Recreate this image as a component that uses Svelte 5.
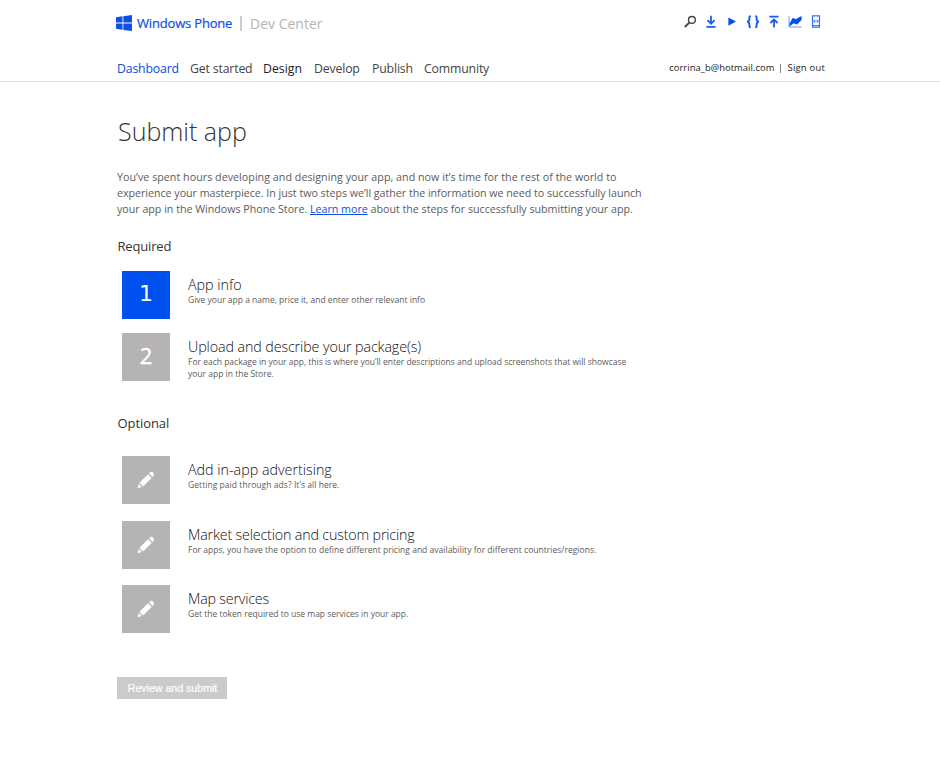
<script>
  const nav = [
    { label: 'Dashboard', state: 'active', width: 73 },
    { label: 'Get started', state: '', width: 73 },
    { label: 'Design', state: 'strong', width: 51 },
    { label: 'Develop', state: '', width: 58 },
    { label: 'Publish', state: '', width: 52 },
    { label: 'Community', state: '', width: 70 }
  ];
  const required = [
    { id: 'info', mark: '1', title: 'App info', lines: ['Give your app a name, price it, and enter other relevant info'] },
    {
      id: 'upload',
      mark: '2',
      title: 'Upload and describe your package(s)',
      lines: [
        'For each package in your app, this is where you’ll enter descriptions and upload screenshots that will showcase',
        'your app in the Store.'
      ]
    }
  ];
  const optional = [
    { id: 'ads', title: 'Add in-app advertising', lines: ['Getting paid through ads? It’s all here.'] },
    {
      id: 'market',
      title: 'Market selection and custom pricing',
      lines: ['For apps, you have the option to define different pricing and availability for different countries/regions.']
    },
    { id: 'maps', title: 'Map services', lines: ['Get the token required to use map services in your app.'] }
  ];
</script>

{#snippet step(item)}
  <li class="step {item.id}">
    <div class="tile">
      {#if item.mark}
        {item.mark}
      {:else}
        <svg width="18" height="18" viewBox="0 0 18 18" fill="#fff">
          <path d="M11 3.2 14.7 6.9 6 15.4 2.4 11.8z" />
          <path d="M12 2.3 13.1 1.2Q14.6 0 16.1 1.5T16.6 4.8L15.5 5.9z" />
          <path d="M1.7 12.9 4.8 16 .6 17.2z" />
        </svg>
      {/if}
    </div>
    <div class="copy">
      <h3>{item.title}</h3>
      {#each item.lines as line}
        <p>{line}</p>
      {/each}
    </div>
  </li>
{/snippet}

<div class="page">
  <header>
    <div class="top">
      <a class="brand" href="#home">
        <svg width="16" height="16" viewBox="0 0 16 16" fill="#0d4fe0">
          <path d="M0 2.3 6.5 1.3V7.6H0zM7.3 1.2 16 0V7.6H7.3zM0 8.4H6.5V14.8L0 13.8zM7.3 8.4H16V16L7.3 14.9z" />
        </svg>
        <span class="name">Windows Phone</span>
        <i class="bar"></i>
        <span class="center">Dev Center</span>
      </a>
      <div class="tools">
        <svg viewBox="0 0 14 14" fill="none" stroke="#444"><circle cx="8.9" cy="4.9" r="3.4" stroke-width="1.4" /><path d="M6.3 7.6 1.8 12" stroke-width="1.9" /></svg>
        <svg viewBox="0 0 14 14" fill="none" stroke="#1a5cf0" stroke-width="1.8"><path d="M7 .8V8.6M3.4 5.2 7 8.7 10.6 5.2M2.4 11.9H11.6" /></svg>
        <svg viewBox="0 0 14 14" fill="#0050f0"><path d="M3.4 2.4 11 6.6 3.4 10.8z" /></svg>
        <svg viewBox="0 0 14 14" fill="none" stroke="#1a5cf0" stroke-width="1.9"><path d="M4.8 1.2C2.9 1.2 3.4 2.4 3.4 3.8S2.8 6.4 1.2 6.7C2.8 7 3.4 8 3.4 9.6S2.9 12.2 4.8 12.2M9.2 1.2C11.1 1.2 10.6 2.4 10.6 3.8S11.2 6.4 12.8 6.7C11.2 7 10.6 8 10.6 9.6S11.1 12.2 9.2 12.2" /></svg>
        <svg viewBox="0 0 14 14" fill="none" stroke="#1a5cf0" stroke-width="1.8"><path d="M7 12.6V4.6M3.4 8 7 4.5 10.6 8M2.4 1.7H11.6" /></svg>
        <svg viewBox="0 0 14 14"><path d="M1 1V12H13.5" fill="none" stroke="#6b9af5" /><path d="M1.5 8.4 4.8 2.8 7.6 4.2 13.6 1V5L9 9.6 5.6 8.2 1.5 11.4z" fill="#0050f0" /></svg>
        <svg viewBox="0 0 14 14" fill="none" stroke="#3470f2"><path d="M3.5 .9H10.5V12.1H3.5z" stroke-width="1.2" /><path d="M3.5 10.6H10.5" /><path d="M6.3 4.9 4.9 6.3 6.3 7.7M7.7 4.9 9.1 6.3 7.7 7.7" stroke-width="1.1" /></svg>
      </div>
    </div>
    <div class="menu">
      <nav>
        {#each nav as item}
          <a class={item.state} href="#{item.label}" style="width: {item.width}px">{item.label}</a>
        {/each}
      </nav>
      <div class="account">
        <span class="mail">corrina_b@hotmail.com</span>
        <i></i>
        <span class="out">Sign out</span>
      </div>
    </div>
  </header>

  <main>
    <h1>Submit app</h1>
    <div class="intro">
      <p class="opening">You’ve spent hours developing and designing your app, and now it’s time for the rest of the world to</p>
      <p class="middle">experience your masterpiece. In just two steps we’ll gather the information we need to successfully launch</p>
      <p class="closing">your app in the Windows Phone Store. <a href="#learn">Learn more</a> about the steps for successfully submitting your app.</p>
    </div>
    <h2>Required</h2>
    <ul class="required">{#each required as item}{@render step(item)}{/each}</ul>
    <h2 class="second">Optional</h2>
    <ul class="optional">{#each optional as item}{@render step(item)}{/each}</ul>
    <button type="button">Review and submit</button>
  </main>
</div>

<style>
  :global(body) { background: #fff; }
  .page { width: 940px; height: 762px; overflow: hidden; font-family: 'Open Sans', 'Noto Sans', sans-serif; color: #333; }
  h1, h2, h3, p, ul { margin: 0; padding: 0; font-weight: 400; white-space: nowrap; }
  ul { list-style: none; }
  a { color: inherit; text-decoration: none; }
  header { box-sizing: border-box; height: 82px; padding: 14px 115px 0 116px; border-bottom: 1px solid #e3e3e3; }
  .top { display: flex; justify-content: space-between; height: 45px; }
  .brand { display: flex; align-items: center; height: 18px; white-space: nowrap; }
  .name { width: 95px; margin-left: 5px; font-size: 13px; letter-spacing: -.18px; color: #0d4fe0; -webkit-text-stroke: .2px #0d4fe0; }
  .bar { width: 2px; height: 15px; margin: 0 8px; background: #ccc; }
  .center { font-size: 14px; color: #b4b4b4; }
  .tools { display: flex; gap: 7px; padding: .7px 1.8px 0 0; }
  .tools svg { width: 14px; height: 14px; }
  .menu { display: flex; justify-content: space-between; font-size: 12.3px; line-height: 20px; white-space: nowrap; }
  nav { display: flex; padding-left: 1px; letter-spacing: -.17px; }
  nav a { color: #444; }
  nav .active { color: #0d4bd8; }
  nav .strong { color: #222; letter-spacing: 0; }
  .account { display: flex; align-items: center; height: 18px; font-size: 9.4px; letter-spacing: .06px; color: #222; }
  .account i { width: 1px; height: 9px; margin: 0 6px; background: #888; }
  .account .out { letter-spacing: .25px; }
  main { padding-left: 117px; }
  h1 { padding: 31px 0 0 1px; height: 56px; font-size: 25px; font-weight: 300; line-height: 36px; }
  .intro { font-size: 10.7px; line-height: 16px; color: #5c5c5c; }
  .opening { letter-spacing: .035px; }
  .middle { letter-spacing: -.028px; }
  .closing { letter-spacing: -.014px; }
  .intro a { color: #0d4fe0; text-decoration: underline; }
  h2 { font-size: 13px; line-height: 20px; padding-top: 19px; padding-left: .5px; letter-spacing: -.17px; }
  .second { padding-top: 18px; letter-spacing: -.08px; }
  .required { margin-top: 15px; }
  .optional { margin-top: 23px; }
  .step { display: flex; padding-left: 5px; height: 48px; margin-bottom: 14px; }
  .ads { margin-bottom: 17px; }
  .market { margin-bottom: 16px; }
  .tile { display: flex; align-items: center; justify-content: center; width: 48px; height: 48px; margin-right: 18px; background: #b5b3b4; color: #fff; font-size: 22px; line-height: 44px; }
  .required .tile { box-sizing: border-box; padding-bottom: 4px; }
  .upload .tile { -webkit-text-stroke: .4px #fff; }
  .info .tile { background: #0050f0; font-family: 'DejaVu Sans', sans-serif; padding-bottom: 2px; }
  .copy { padding-top: 4px; }
  h3 { font-size: 14.3px; font-weight: 300; line-height: 19px; color: #111; }
  .upload h3 { letter-spacing: -.11px; }
  .market h3 { letter-spacing: -.17px; }
  .maps h3 { letter-spacing: -.2px; }
  .copy p { font-size: 8.5px; line-height: 12px; color: #5c5c5c; }
  .ads p { letter-spacing: .05px; }
  .market p { letter-spacing: .018px; }
  button { display: block; margin-top: 44px; width: 110px; height: 22px; padding: 0 0 0 1px; border: 0; background: #cbcbcb; color: #fff; font: 10.6px 'Liberation Sans', Arial, sans-serif; -webkit-text-stroke: .2px #fff; }
</style>
